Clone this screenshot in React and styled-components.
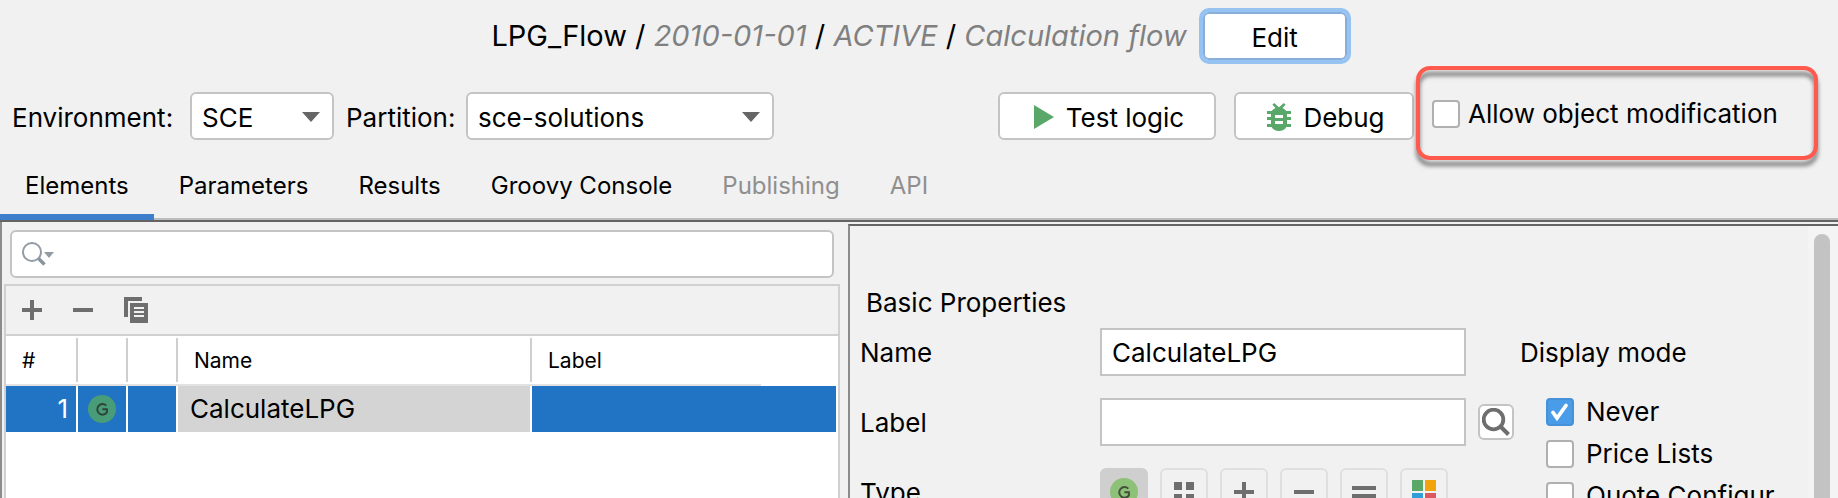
import { useState } from 'react';
import styled, { createGlobalStyle } from 'styled-components';

function App() {
  const [tab, setTab] = useState('Elements');
  const [allow, setAllow] = useState(false);
  const [type, setType] = useState('groovy');
  const [modes, setModes] = useState(['Never']);
  const [name, setName] = useState('CalculateLPG');

  const toggleMode = mode =>
    setModes(modes.includes(mode) ? modes.filter(m => m !== mode) : [...modes, mode]);

  return (
    <Window>
      <GlobalStyle />
      <Header>
        <Title>
          LPG_Flow / <Muted>2010-01-01</Muted> / <Muted>ACTIVE</Muted> /{' '}
          <Muted>Calculation flow</Muted>
        </Title>
        <EditBtn>Edit</EditBtn>
      </Header>

      <Toolbar>
        <Group>
          <FieldLabel htmlFor="environment" width={166}>
            Environment:
          </FieldLabel>
          <SelectWrap width={144}>
            <Select id="environment">
              <option>SCE</option>
            </Select>
            <ArrowIcon />
          </SelectWrap>
          <FieldLabel htmlFor="partition" width={108}>
            Partition:
          </FieldLabel>
          <SelectWrap width={308}>
            <Select id="partition">
              <option>sce-solutions</option>
            </Select>
            <ArrowIcon />
          </SelectWrap>
        </Group>
        <Actions>
          <ActionBtn width={218}>
            <PlayIcon />
            Test logic
          </ActionBtn>
          <ActionBtn width={180}>
            <BugIcon />
            Debug
          </ActionBtn>
        </Actions>
        <Callout>
          <CheckLabel gap={8}>
            <Checkbox checked={allow} onChange={() => setAllow(!allow)} />
            Allow object modification
          </CheckLabel>
        </Callout>
      </Toolbar>

      <Tabs role="tablist">
        {tabs.map(item => (
          <Tab
            key={item.label}
            role="tab"
            aria-selected={tab === item.label}
            disabled={item.disabled}
            onClick={() => setTab(item.label)}
          >
            {item.label}
          </Tab>
        ))}
      </Tabs>

      <Split>
        <ListPane>
          <SearchBox>
            <SearchIcon />
            <SearchInput aria-label="Search elements" />
          </SearchBox>
          <ListFrame>
            <ListTools>
              <ToolBtn aria-label="Add">
                <PlusIcon />
              </ToolBtn>
              <ToolBtn aria-label="Remove">
                <MinusIcon />
              </ToolBtn>
              <ToolBtn aria-label="Copy">
                <CopyIcon />
              </ToolBtn>
            </ListTools>
            <Table>
              <colgroup>
                <col width="72" />
                <col width="50" />
                <col width="50" />
                <col width="354" />
                <col />
              </colgroup>
              <thead>
                <tr>
                  {columns.map(column => (
                    <Th key={column.id}>
                      <ThText>{column.label}</ThText>
                    </Th>
                  ))}
                </tr>
              </thead>
              <tbody>
                <tr>
                  <Td align="right">1</Td>
                  <Td align="center">
                    <GroovyIcon fill="#499c78" />
                  </Td>
                  <Td />
                  <NameTd>CalculateLPG</NameTd>
                  <Td />
                </tr>
              </tbody>
            </Table>
          </ListFrame>
        </ListPane>

        <DetailPane>
          <Detail>
            <Heading>Basic Properties</Heading>
            <Columns>
              <Form>
                <label htmlFor="name">Name</label>
                <TextInput id="name" value={name} onChange={e => setName(e.target.value)} />
                <span />
                <label htmlFor="label">Label</label>
                <TextInput id="label" />
                <LookupBtn aria-label="Look up label">
                  <LookupIcon />
                </LookupBtn>
                <span>Type</span>
                <TypeList>
                  {types.map(({ id, Icon }) => (
                    <TypeBtn
                      key={id}
                      aria-label={id}
                      aria-pressed={type === id}
                      onClick={() => setType(id)}
                    >
                      <Icon />
                    </TypeBtn>
                  ))}
                </TypeList>
              </Form>
              <Display>
                <DisplayTitle>Display mode</DisplayTitle>
                <ModeList>
                  {displayModes.map(mode => (
                    <CheckLabel key={mode} gap={12}>
                      <Checkbox
                        checked={modes.includes(mode)}
                        onChange={() => toggleMode(mode)}
                      />
                      {mode}
                    </CheckLabel>
                  ))}
                </ModeList>
              </Display>
            </Columns>
          </Detail>
          <ScrollTrack>
            <ScrollThumb />
          </ScrollTrack>
        </DetailPane>
      </Split>
    </Window>
  );
}

// icons
const ArrowIcon = () => (
  <svg width="18" height="10" viewBox="0 0 18 10" aria-hidden="true">
    <path d="M0 0h18L9 10z" fill="#666" />
  </svg>
);

const PlayIcon = () => (
  <svg width="20" height="24" viewBox="0 0 20 24">
    <path d="M0 0l20 12L0 24z" fill="#59a869" />
  </svg>
);

const BugIcon = () => (
  <svg width="24" height="28" viewBox="0 0 24 28" fill="#59a869">
    <path d="M5.400 1.800L7.200 0l4.400 4h.8l4.400-4 1.800 1.800-3.200 3.200C17.600 6 18.600 7 19.200 8H24v3h-4v3h4v3h-4v4h4v3h-4.600C18 26.400 15.200 28 12 28s-6-1.600-7.400-4H0v-3h4v-4H0v-3h4v-3H0V8h4.800C5.400 7 6.400 6 8.600 5z" />
    <path d="M8 12h8v3H8zM8 18h8v3H8z" fill="#fff" />
  </svg>
);

const SearchIcon = () => (
  <svg width="32" height="24" viewBox="0 0 32 24">
    <circle cx="10" cy="10" r="9" fill="none" stroke="#929ba3" strokeWidth="2" />
    <path d="M16.500 16.500L22.500 22.500" stroke="#8a949c" strokeWidth="3.400" />
    <path d="M22 10h10l-5 6z" fill="#929ba3" />
  </svg>
);

const PlusIcon = () => (
  <svg width="20" height="20" viewBox="0 0 20 20">
    <path d="M8 0h4v8h8v4h-8v8H8v-8H0V8h8z" fill="#6e6e6e" />
  </svg>
);

const MinusIcon = () => (
  <svg width="20" height="20" viewBox="0 0 20 20">
    <path d="M0 8h20v4H0z" fill="#6e6e6e" />
  </svg>
);

const CopyIcon = () => (
  <svg width="24" height="26" viewBox="0 0 24 26">
    <path d="M0 0h18v4H4v16H0z" fill="#6e6e6e" />
    <path
      d="M6 6h18v20H6zM10 10v2h10v-2zM10 14v2h10v-2zM10 18v2h10v-2z"
      fill="#6e6e6e"
      fillRule="evenodd"
    />
  </svg>
);

const GroovyIcon = ({ fill = '#8dc177' }) => (
  <svg width="28" height="28" viewBox="0 0 28 28">
    <circle cx="14" cy="14" r="14" fill={fill} />
    <path
      d="M18.300 10.600A5.300 5.300 0 1 0 18.900 17.400V14.200H14.400"
      fill="none"
      stroke="#231f20"
      strokeOpacity="0.7"
      strokeWidth="2"
    />
  </svg>
);

const GridIcon = () => (
  <svg width="20" height="20" viewBox="0 0 20 20">
    <path d="M0 0h8v8H0zM12 0h8v8h-8zM0 12h8v8H0zM12 12h8v8h-8z" fill="#6e6e6e" />
  </svg>
);

const EqualIcon = () => (
  <svg width="24" height="12" viewBox="0 0 24 12">
    <path d="M0 0h24v4H0zM0 8h24v4H0z" fill="#6e6e6e" />
  </svg>
);

const ColorIcon = () => (
  <svg width="24" height="24" viewBox="0 0 24 24">
    <path d="M0 0h11v11H0z" fill="#59a869" />
    <path d="M13 0h11v11H13z" fill="#f0a30a" />
    <path d="M0 13h11v11H0z" fill="#309fd9" />
    <path d="M13 13h11v11H13z" fill="#db5860" />
  </svg>
);

const LookupIcon = () => (
  <svg width="28" height="28" viewBox="0 0 28 28">
    <circle cx="11.500" cy="11.500" r="9.800" fill="none" stroke="#6e6e6e" strokeWidth="3.800" />
    <path d="M18.500 18.500L26.500 26.500" stroke="#6e6e6e" strokeWidth="4" />
  </svg>
);

const CheckIcon = () => (
  <svg width="28" height="28" viewBox="0 0 28 28" aria-hidden="true">
    <path
      d="M7 14.500L11 20L20 7.500"
      fill="none"
      stroke="#fff"
      strokeWidth="3.800"
      strokeLinecap="round"
    />
  </svg>
);

const Checkbox = ({ checked, onChange }) => (
  <CheckWrap>
    <CheckInput type="checkbox" checked={checked} onChange={onChange} />
    {checked && <CheckIcon />}
  </CheckWrap>
);

const tabs = [
  { label: 'Elements' },
  { label: 'Parameters' },
  { label: 'Results' },
  { label: 'Groovy Console' },
  { label: 'Publishing', disabled: true },
  { label: 'API', disabled: true },
];

const columns = [
  { id: 'index', label: '#' },
  { id: 'type' },
  { id: 'state' },
  { id: 'name', label: 'Name' },
  { id: 'label', label: 'Label' },
];

const types = [
  { id: 'groovy', Icon: GroovyIcon },
  { id: 'matrix', Icon: GridIcon },
  { id: 'add', Icon: PlusIcon },
  { id: 'subtract', Icon: MinusIcon },
  { id: 'result', Icon: EqualIcon },
  { id: 'color', Icon: ColorIcon },
];

const displayModes = ['Never', 'Price Lists', 'Quote Configur'];

export default App;

const GlobalStyle = createGlobalStyle`
  * {
    box-sizing: border-box;
  }
  body {
    margin: 0;
    background: #f1f1f1;
    color: #000;
  }
  body, button, input, select {
    font-family: Inter, 'Liberation Sans', sans-serif;
    font-size: 26px;
  }
  button {
    cursor: pointer;
  }
  svg {
    display: block;
    flex: none;
  }
`;

const Window = styled.div`
  display: flex;
  flex-direction: column;
  height: 100vh;
  overflow: hidden;
`;

// header
const Header = styled.header`
  display: flex;
  flex: none;
  align-items: center;
  justify-content: center;
  gap: 16px;
  height: 66px;
  padding: 10px 0 4px;
`;

const Title = styled.h1`
  margin: 0;
  font-size: 29px;
  font-weight: 400;
  line-height: 48px;
  white-space: nowrap;
`;

const Muted = styled.em`
  color: #808080;
`;

const EditBtn = styled.button`
  width: 144px;
  height: 48px;
  padding: 2px 0 0;
  background: white;
  border: 2px solid #87afda;
  border-radius: 6px;
  outline: 4px solid #97c3f3;
`;

// toolbar
const Toolbar = styled.div`
  display: flex;
  flex: none;
  align-items: center;
  height: 94px;
  padding: 0 20px 0 12px;
`;

const Group = styled.div`
  display: flex;
  align-items: center;
  padding-top: 6px;
`;

const FieldLabel = styled.label`
  width: ${props => props.width}px;
  padding-top: 2px;
  white-space: nowrap;
`;

const SelectWrap = styled.div`
  position: relative;
  width: ${props => props.width}px;
  margin: 0 12px;

  svg {
    position: absolute;
    top: 20px;
    right: 14px;
    pointer-events: none;
  }
`;

const Select = styled.select`
  width: 100%;
  height: 48px;
  padding: 2px 10px 0;
  color: #000;
  background: white;
  border: 2px solid #c4c4c4;
  border-radius: 6px;
  appearance: none;
`;

const Actions = styled.div`
  display: flex;
  gap: 18px;
  margin-left: auto;
  padding: 6px 2px 0 0;
`;

const ActionBtn = styled.button`
  display: flex;
  align-items: center;
  justify-content: center;
  gap: 12px;
  width: ${props => props.width}px;
  height: 48px;
  padding: 2px 0 0 4px;
  background: white;
  border: 2px solid #c4c4c4;
  border-radius: 6px;
  white-space: nowrap;
`;

const Callout = styled.div`
  position: relative;
  display: flex;
  align-items: center;
  width: 402px;
  height: 94px;
  padding: 2px 0 0 16px;

  &::after {
    content: '';
    position: absolute;
    inset: 0;
    border: 4px solid #ff5a4d;
    border-radius: 14px;
    filter: drop-shadow(0 6px 2px rgba(0, 0, 0, 0.5));
    pointer-events: none;
  }
`;

const CheckLabel = styled.label`
  display: flex;
  align-items: center;
  gap: ${props => props.gap}px;
  line-height: 28px;
  white-space: nowrap;
`;

const CheckWrap = styled.span`
  position: relative;
  flex: none;
  width: 28px;
  height: 28px;

  svg {
    position: absolute;
    inset: 0;
    pointer-events: none;
  }
`;

const CheckInput = styled.input`
  display: block;
  width: 28px;
  height: 28px;
  margin: 0;
  background: white;
  border: 2px solid #b0b0b0;
  border-radius: 4px;
  appearance: none;

  &:checked {
    background: #4b9ce8;
    border-color: #4791d9;
  }
`;

// tabs
const Tabs = styled.div`
  display: flex;
  flex: none;
  height: 62px;
  border-bottom: 2px solid #646464;
  box-shadow: inset 0 -2px #bdbdbd;
`;

const Tab = styled.button`
  padding: 0 25px 4px;
  background: none;
  border: none;
  border-bottom: 6px solid transparent;
  font-size: 24px;
  white-space: nowrap;

  &[aria-selected='true'] {
    border-color: #3d7fcc;
  }
  &:disabled {
    color: #8f8f8f;
    cursor: default;
  }
`;

// elements list
const Split = styled.main`
  display: grid;
  flex: 1;
  grid-template-columns: 848px minmax(0, 1fr);
  grid-template-rows: minmax(0, 1fr);
  min-height: 0;
`;

const ListPane = styled.section`
  display: flex;
  flex-direction: column;
  gap: 6px;
  padding: 8px 8px 0 2px;
  border-left: 2px solid #8c8c8c;
`;

const SearchBox = styled.div`
  display: flex;
  align-items: center;
  height: 48px;
  margin: 0 6px;
  padding-left: 10px;
  background: white;
  border: 2px solid #c4c4c4;
  border-radius: 6px;
`;

const SearchInput = styled.input`
  flex: 1;
  min-width: 0;
  border: none;
  outline: none;
`;

const ListFrame = styled.div`
  flex: 1;
  background: white;
  border: 2px solid #d0d0d0;
  border-bottom: none;
`;

const ListTools = styled.div`
  display: flex;
  align-items: center;
  gap: 31px;
  height: 50px;
  padding: 0 16px;
  background: #f1f1f1;
  border-bottom: 2px solid #d0d0d0;
`;

const ToolBtn = styled.button`
  padding: 0;
  background: none;
  border: none;
`;

const Table = styled.table`
  width: 100%;
  padding-right: 2px;
  border-collapse: separate;
  border-spacing: 0;
  table-layout: fixed;

  thead {
    background: linear-gradient(#e2e2e2, #e2e2e2) left bottom / 91% 2px no-repeat;
  }
`;

const Th = styled.th`
  height: 50px;
  padding: 2px 0 4px;
  font-size: 21px;
  font-weight: 400;
  text-align: left;
`;

const ThText = styled.div`
  height: 44px;
  padding-left: 16px;
  line-height: 46px;

  ${Th}:not(:last-child) > & {
    border-right: 2px solid #cfcfcf;
  }
`;

const Td = styled.td`
  height: 46px;
  padding: 0 ${props => (props.align === 'right' ? 8 : 0)}px 0 0;
  color: white;
  background: #2173c4;
  line-height: 46px;

  &:not(:last-child) {
    border-right: 2px solid white;
  }
  svg {
    margin: 0 auto;
  }
`;

const NameTd = styled(Td)`
  padding-left: 12px;
  color: #000;
  background: #d4d4d4;
`;

// properties
const DetailPane = styled.section`
  display: flex;
  margin-top: 2px;
  border-top: 2px solid #646464;
  border-left: 2px solid #8c8c8c;
  overflow: hidden;
`;

const Detail = styled.div`
  flex: 1;
  min-width: 0;
  padding: 60px 0 0 10px;
`;

const Heading = styled.h2`
  margin: 0;
  padding-left: 6px;
  font-size: 26px;
  font-weight: 400;
  line-height: 34px;
`;

const Columns = styled.div`
  display: flex;
  gap: 6px;
  padding-top: 8px;
`;

const Form = styled.div`
  display: grid;
  flex: 1;
  grid-template-columns: 228px minmax(0, 1fr) 36px;
  grid-auto-rows: 48px;
  align-items: center;
  gap: 22px 12px;
`;

const TextInput = styled.input`
  width: 100%;
  height: 48px;
  padding: 0 10px;
  background: white;
  border: 2px solid #c4c4c4;
  border-radius: 0;
`;

const LookupBtn = styled.button`
  display: grid;
  place-items: center;
  width: 36px;
  height: 36px;
  padding: 0;
  background: white;
  border: 2px solid #c4c4c4;
  border-radius: 6px;
`;

const TypeList = styled.div`
  display: flex;
  gap: 12px;
`;

const TypeBtn = styled.button`
  display: grid;
  flex: none;
  place-items: center;
  width: 48px;
  height: 48px;
  padding: 0;
  background: none;
  border: 2px solid #dfdfdf;
  border-radius: 6px;

  &[aria-pressed='true'] {
    background: #cfcfcf;
    border-color: #cfcfcf;
  }
`;

const Display = styled.div`
  width: 288px;
`;

const DisplayTitle = styled.div`
  line-height: 50px;
`;

const ModeList = styled.div`
  display: grid;
  gap: 14px;
  padding: 20px 0 0 26px;
`;

const ScrollTrack = styled.div`
  width: 30px;
  padding: 8px 8px 0 6px;
  background: #f4f4f4;
`;

const ScrollThumb = styled.div`
  height: 100%;
  background: #c3c3c3;
  border-radius: 8px 8px 0 0;
`;
